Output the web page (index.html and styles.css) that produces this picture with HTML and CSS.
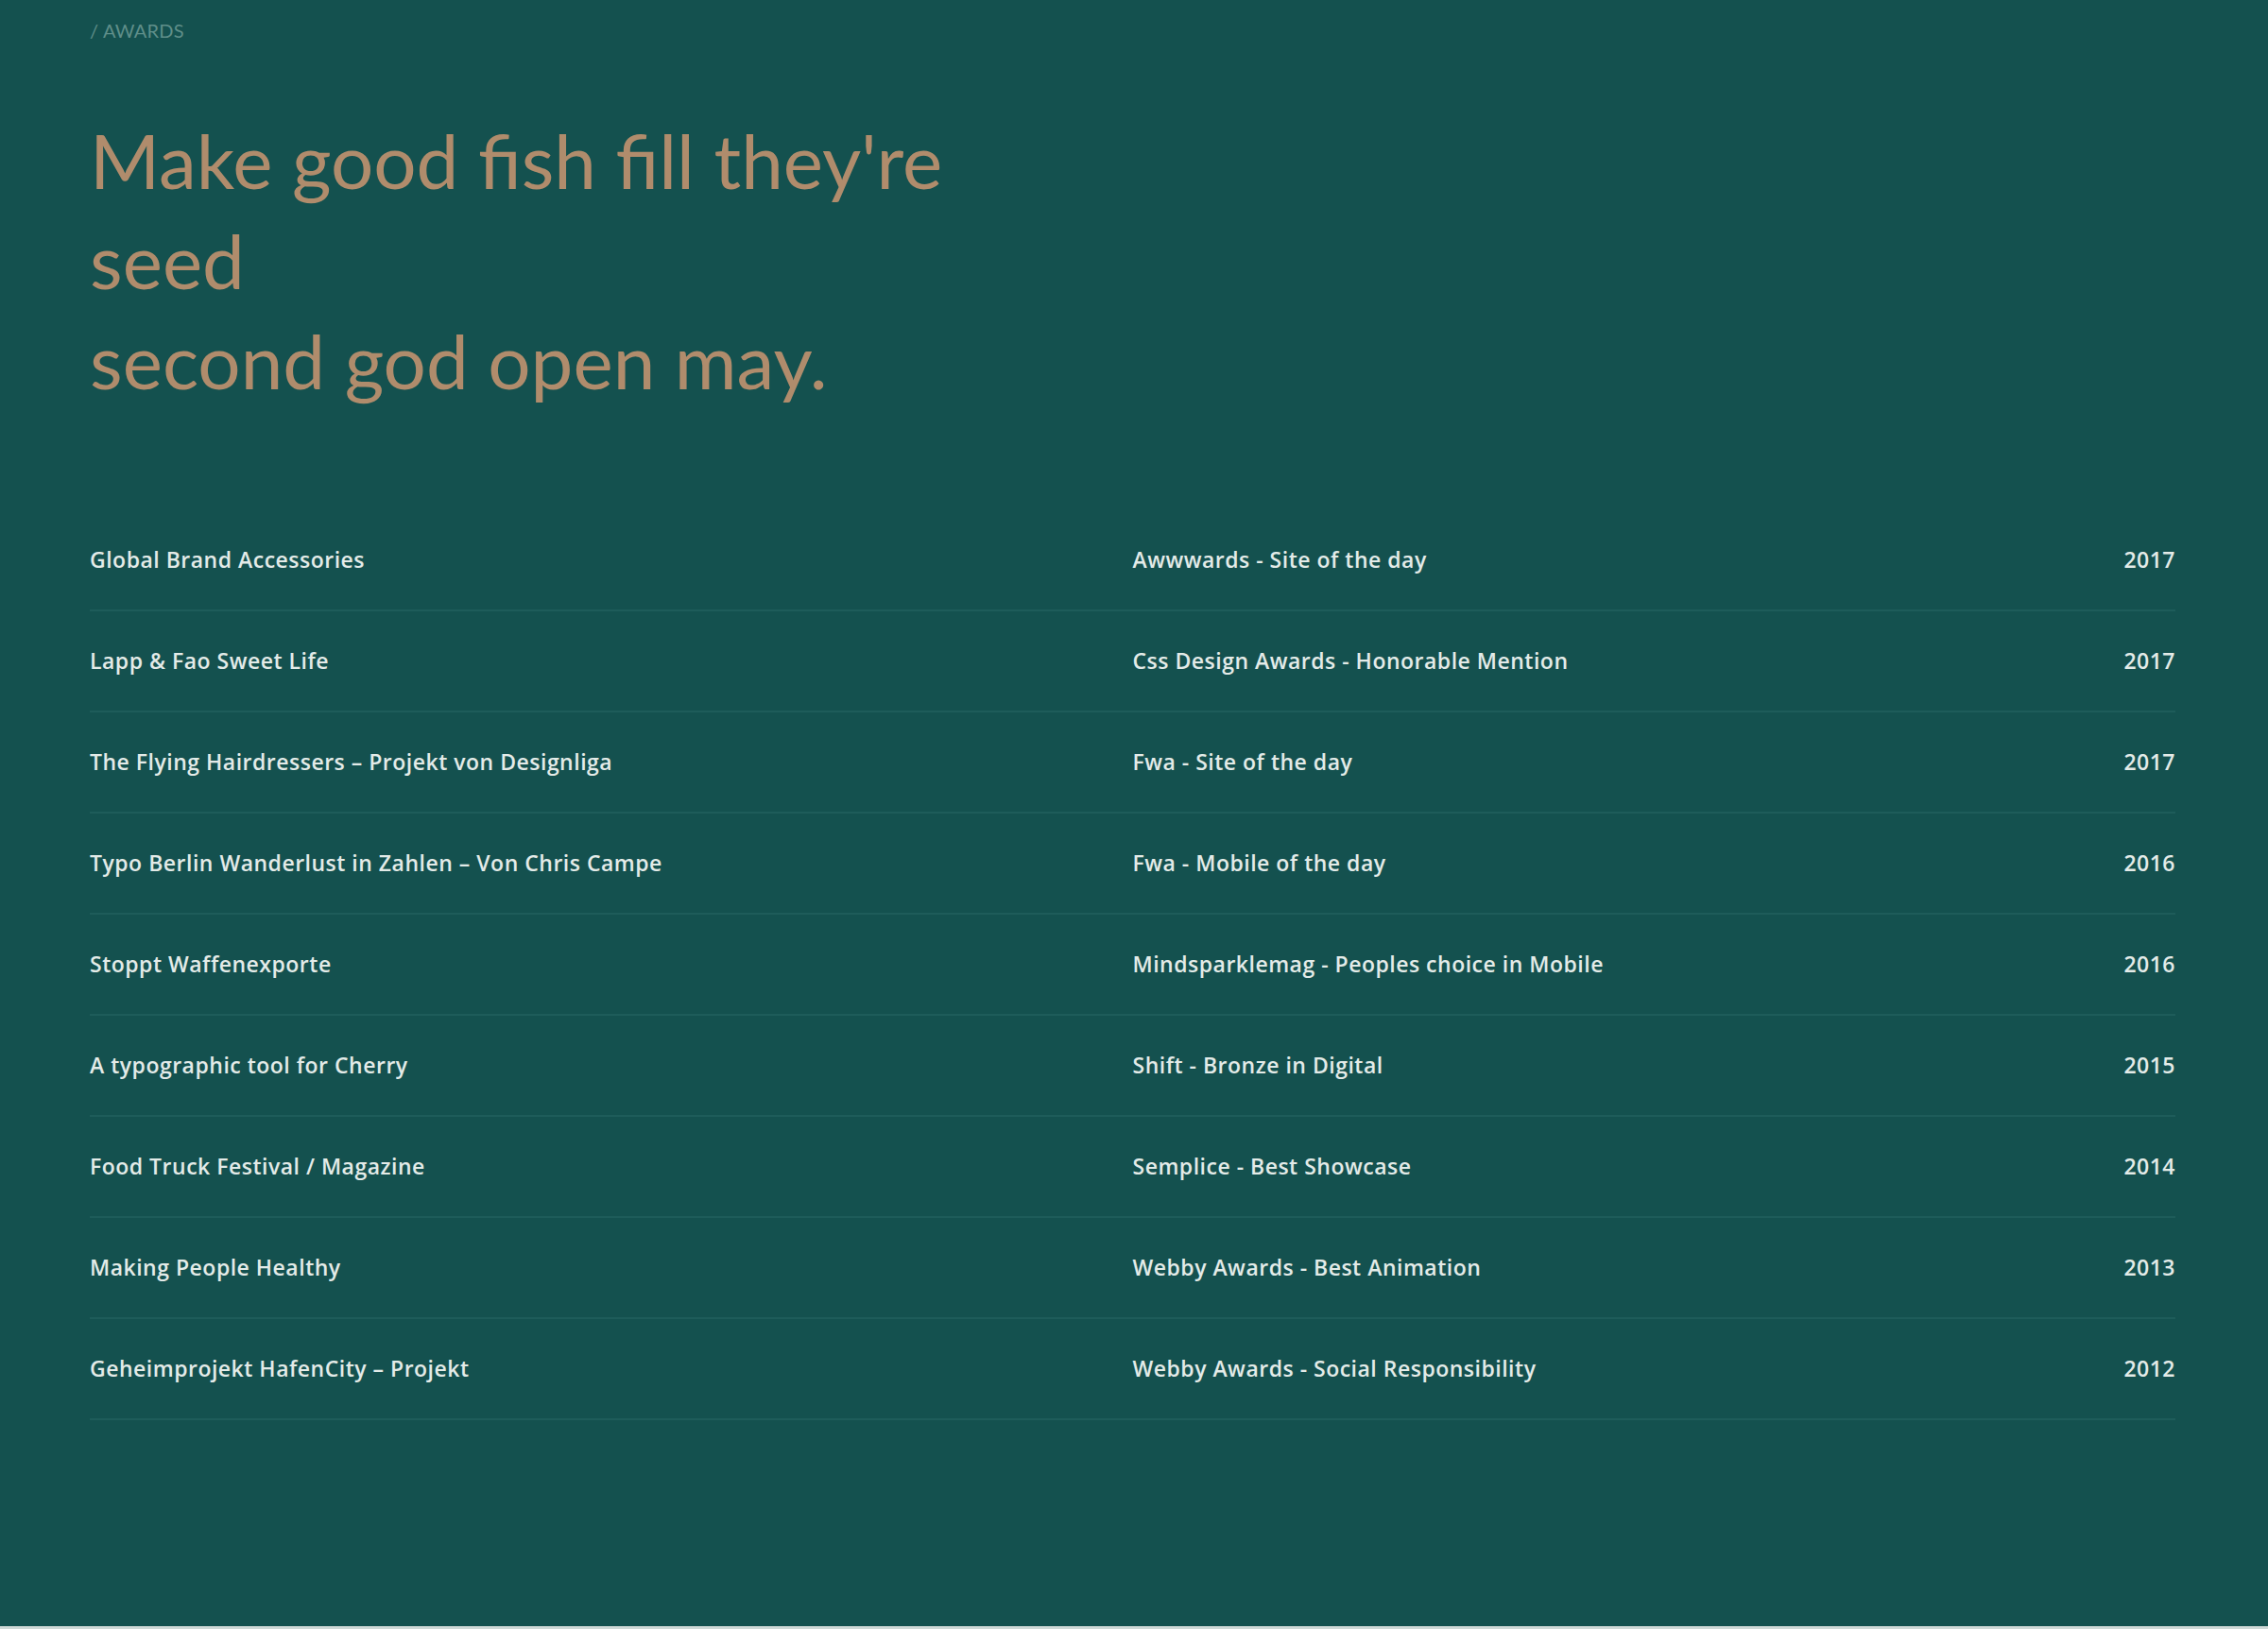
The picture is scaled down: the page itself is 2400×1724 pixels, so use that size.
FILE: index.html
```html
<!DOCTYPE html>
<html lang="en">
<head>
    <meta charset="UTF-8">
    <meta name="viewport" content="width=device-width, initial-scale=1.0">
    <title>Awards</title>
    <link rel="stylesheet" href="styles.css">
</head>
<body>
    <section class="awards">
        <div class="section-label">/ AWARDS</div>

        <h1 class="awards-title">
            Make good fish fill they're<br>
            seed<br>
            second god open may.
        </h1>

        <div class="awards-list">
            <div class="award-row">
                <div class="project">Global Brand Accessories</div>
                <div class="award-info">
                    <span class="award-name">Awwwards - Site of the day</span>
                    <span class="award-year">2017</span>
                </div>
            </div>
            <div class="award-row">
                <div class="project">Lapp &amp; Fao Sweet Life</div>
                <div class="award-info">
                    <span class="award-name">Css Design Awards - Honorable Mention</span>
                    <span class="award-year">2017</span>
                </div>
            </div>
            <div class="award-row">
                <div class="project">The Flying Hairdressers – Projekt von Designliga</div>
                <div class="award-info">
                    <span class="award-name">Fwa - Site of the day</span>
                    <span class="award-year">2017</span>
                </div>
            </div>
            <div class="award-row">
                <div class="project">Typo Berlin Wanderlust in Zahlen – Von Chris Campe</div>
                <div class="award-info">
                    <span class="award-name">Fwa - Mobile of the day</span>
                    <span class="award-year">2016</span>
                </div>
            </div>
            <div class="award-row">
                <div class="project">Stoppt Waffenexporte</div>
                <div class="award-info">
                    <span class="award-name">Mindsparklemag - Peoples choice in Mobile</span>
                    <span class="award-year">2016</span>
                </div>
            </div>
            <div class="award-row">
                <div class="project">A typographic tool for Cherry</div>
                <div class="award-info">
                    <span class="award-name">Shift - Bronze in Digital</span>
                    <span class="award-year">2015</span>
                </div>
            </div>
            <div class="award-row">
                <div class="project">Food Truck Festival / Magazine</div>
                <div class="award-info">
                    <span class="award-name">Semplice - Best Showcase</span>
                    <span class="award-year">2014</span>
                </div>
            </div>
            <div class="award-row">
                <div class="project">Making People Healthy</div>
                <div class="award-info">
                    <span class="award-name">Webby Awards - Best Animation</span>
                    <span class="award-year">2013</span>
                </div>
            </div>
            <div class="award-row">
                <div class="project">Geheimprojekt HafenCity – Projekt</div>
                <div class="award-info">
                    <span class="award-name">Webby Awards - Social Responsibility</span>
                    <span class="award-year">2012</span>
                </div>
            </div>
        </div>
    </section>
</body>
</html>
```

FILE: styles.css
```css
* {
    margin: 0;
    padding: 0;
    box-sizing: border-box;
}

body {
    font-family: 'Lato', 'Noto Sans', sans-serif;
    background: #cfd9d7;
}

.awards {
    background: #14514f;
    min-height: 1721px;
    padding: 20px 98px 0 95px;
}

.section-label {
    color: #5f8e89;
    font-size: 20px;
    line-height: 24px;
    letter-spacing: 0.2px;
}

.awards-title {
    margin-top: 72px;
    color: #b08c6c;
    font-size: 80px;
    font-weight: 400;
    line-height: 106px;
    letter-spacing: 0;
}

.awards-list {
    margin-top: 106px;
}

.award-row {
    display: grid;
    grid-template-columns: 1fr 1fr;
    padding: 38px 0 39px;
    border-bottom: 2px solid #1e5c5a;
    color: #e3ebe8;
    font-family: 'Open Sans', 'Lato', sans-serif;
    font-size: 23px;
    font-weight: 600;
    line-height: 28px;
    letter-spacing: 0.5px;
}

.award-info {
    display: flex;
    justify-content: space-between;
}
```
